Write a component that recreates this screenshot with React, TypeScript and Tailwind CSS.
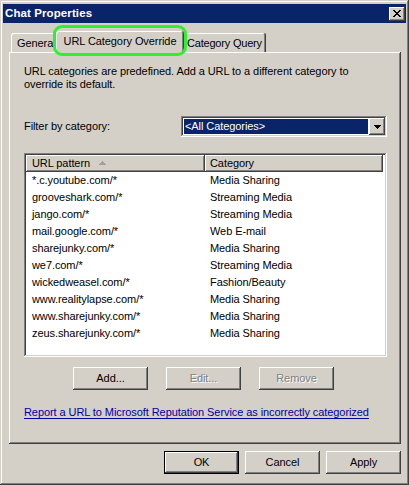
import React from "react";

const RAISED =
  "shadow-[inset_-1px_-1px_0_#404040,inset_1px_1px_0_#ffffff,inset_-2px_-2px_0_#808080]";

function CloseGlyph() {
  const px: [number, number][] = [
    [0, 0], [1, 0], [6, 0], [7, 0],
    [1, 1], [2, 1], [5, 1], [6, 1],
    [2, 2], [3, 2], [4, 2], [5, 2],
    [3, 3], [4, 3],
    [2, 4], [3, 4], [4, 4], [5, 4],
    [1, 5], [2, 5], [5, 5], [6, 5],
    [0, 6], [1, 6], [6, 6], [7, 6],
  ];
  return (
    <svg width="8" height="7" viewBox="0 0 8 7" shapeRendering="crispEdges">
      {px.map(([x, y], i) => (
        <rect key={i} x={x} y={y} width="1" height="1" fill="#000" />
      ))}
    </svg>
  );
}

function DownArrow() {
  return (
    <svg width="7" height="4" viewBox="0 0 7 4" shapeRendering="crispEdges">
      <rect x="0" y="0" width="7" height="1" fill="#000" />
      <rect x="1" y="1" width="5" height="1" fill="#000" />
      <rect x="2" y="2" width="3" height="1" fill="#000" />
      <rect x="3" y="3" width="1" height="1" fill="#000" />
    </svg>
  );
}

function SortArrow() {
  return (
    <svg width="7" height="4" viewBox="0 0 7 4" shapeRendering="crispEdges">
      <rect x="3" y="0" width="1" height="1" fill="#a0a0a0" />
      <rect x="2" y="1" width="3" height="1" fill="#a0a0a0" />
      <rect x="1" y="2" width="5" height="1" fill="#a0a0a0" />
      <rect x="0" y="3" width="7" height="1" fill="#a0a0a0" />
    </svg>
  );
}

function Button({
  label,
  disabled,
  isDefault,
}: {
  label: string;
  disabled?: boolean;
  isDefault?: boolean;
}) {
  if (isDefault) {
    return (
      <div className="w-[75px] h-[23px] border border-black">
        <div className="w-full h-full bg-[#d4d0c8] shadow-[inset_-1px_-1px_0_#404040,inset_1px_1px_0_#ffffff,inset_-2px_-2px_0_#808080] flex items-center justify-center">
          {label}
        </div>
      </div>
    );
  }
  return (
    <div
      className={
        "w-[75px] h-[23px] bg-[#d4d0c8] shadow-[inset_-1px_-1px_0_#404040,inset_1px_1px_0_#ffffff,inset_-2px_-2px_0_#808080] flex items-center justify-center " +
        (disabled ? "text-[#808080] [text-shadow:1px_1px_0_#ffffff]" : "text-black")
      }
    >
      {label}
    </div>
  );
}

const rows: [string, string][] = [
  ["*.c.youtube.com/*", "Media Sharing"],
  ["grooveshark.com/*", "Streaming Media"],
  ["jango.com/*", "Streaming Media"],
  ["mail.google.com/*", "Web E-mail"],
  ["sharejunky.com/*", "Media Sharing"],
  ["we7.com/*", "Streaming Media"],
  ["wickedweasel.com/*", "Fashion/Beauty"],
  ["www.realitylapse.com/*", "Media Sharing"],
  ["www.sharejunky.com/*", "Media Sharing"],
  ["zeus.sharejunky.com/*", "Media Sharing"],
];

export default function App() {
  return (
    <div className="relative w-[409px] h-[485px] overflow-hidden bg-[#d4d0c8] font-['Liberation_Sans',Arial,sans-serif] text-[11px] leading-[13px] tracking-[-0.08px] text-black shadow-[inset_-1px_-1px_0_#404040,inset_1px_1px_0_#d4d0c8,inset_-2px_-2px_0_#808080,inset_2px_2px_0_#ffffff] pt-[4px]">
      {/* Title bar */}
      <div className="mx-[3px] h-[19px] bg-[#0a246a] flex items-center pl-[2px] pr-[1px]">
        <span className="flex-1 font-bold text-white text-[11.5px] tracking-[0.1px]">Chat Properties</span>
        <div className={"w-[16px] h-[14px] bg-[#d4d0c8] flex items-center justify-center " + RAISED}>
          <CloseGlyph />
        </div>
      </div>

      {/* Tabs */}
      <div className="relative z-10 mt-[8px] ml-[11px] h-[21px] flex items-end">
        <div className="w-[50px] h-[19px] overflow-hidden whitespace-nowrap pl-[6px] pt-[4px] bg-[#d4d0c8] rounded-t-[2px] shadow-[inset_-1px_0_0_#404040,inset_1px_1px_0_#ffffff,inset_-2px_0_0_#808080]">
          General
        </div>
        <div className="relative z-10 -ml-[5px] -mb-[1px] w-[128px] h-[22px] whitespace-nowrap text-center pt-[4px] bg-[#d4d0c8] rounded-t-[2px] shadow-[inset_-1px_0_0_#404040,inset_1px_1px_0_#ffffff,inset_-2px_0_0_#808080]">
          URL Category Override
        </div>
        <div className="-ml-[2px] w-[84px] h-[19px] whitespace-nowrap pl-[5px] pt-[4px] tracking-[-0.2px] bg-[#d4d0c8] rounded-t-[2px] shadow-[inset_-1px_0_0_#404040,inset_1px_1px_0_#ffffff,inset_-2px_0_0_#808080]">
          Category Query
        </div>
      </div>

      {/* Green highlight ring */}
      <div className="absolute z-20 left-[53px] top-[25px] w-[134px] h-[31px] border-[3px] border-[#2ef02e] rounded-[9px] pointer-events-none" />

      {/* Panel */}
      <div className="ml-[9px] w-[392px] h-[392px] bg-[#d4d0c8] shadow-[inset_-1px_-1px_0_#404040,inset_1px_1px_0_#ffffff,inset_-2px_-2px_0_#808080] pl-[15px] pt-[13px]">
        <p className="whitespace-nowrap">
          URL categories are predefined. Add a URL to a different category to
          <br />
          override its default.
        </p>

        <div className="mt-[25px] h-[21px] flex items-center">
          <div className="w-[157px]">Filter by category:</div>
          <div className="w-[206px] h-[21px] bg-white p-[2px] flex shadow-[inset_-1px_-1px_0_#ffffff,inset_1px_1px_0_#808080,inset_-2px_-2px_0_#d4d0c8,inset_2px_2px_0_#404040]">
            <div className="flex-1 p-[1px]">
              <div className="h-full bg-[#0a246a] text-white pl-[1px] flex items-center">
                &lt;All Categories&gt;
              </div>
            </div>
            <div className={"w-[16px] h-[17px] bg-[#d4d0c8] flex items-center justify-center " + RAISED}>
              <DownArrow />
            </div>
          </div>
        </div>

        <div className="mt-[16px] w-[363px] h-[204px] bg-white p-[2px] shadow-[inset_-1px_-1px_0_#ffffff,inset_1px_1px_0_#808080,inset_-2px_-2px_0_#d4d0c8,inset_2px_2px_0_#404040]">
          <div className="flex h-[17px]">
            <div className={"w-[179px] h-full bg-[#d4d0c8] flex items-center pl-[6px] " + RAISED}>
              <span>URL pattern</span>
              <span className="ml-[9px] mb-[1px] flex">
                <SortArrow />
              </span>
            </div>
            <div className={"w-[178px] h-full bg-[#d4d0c8] flex items-center pl-[5px] " + RAISED}>
              Category
            </div>
          </div>
          {rows.map(([u, c]) => (
            <div key={u} className="flex h-[17px] items-center">
              <div className="w-[179px] pl-[6px] whitespace-nowrap">{u}</div>
              <div className="pl-[5px] whitespace-nowrap">{c}</div>
            </div>
          ))}
        </div>

        <div className="mt-[10px] ml-[49px] flex gap-[18px]">
          <Button label="Add..." />
          <Button label="Edit..." disabled />
          <Button label="Remove" disabled />
        </div>

        <div className="mt-[16px] whitespace-nowrap">
          <span className="text-[#0000a0] underline underline-offset-[2px]">
            Report a URL to Microsoft Reputation Service as incorrectly categorized
          </span>
        </div>
      </div>

      {/* Bottom buttons */}
      <div className="mt-[7px] ml-[164px] flex gap-[6px]">
        <Button label="OK" isDefault />
        <Button label="Cancel" />
        <Button label="Apply" />
      </div>
    </div>
  );
}
